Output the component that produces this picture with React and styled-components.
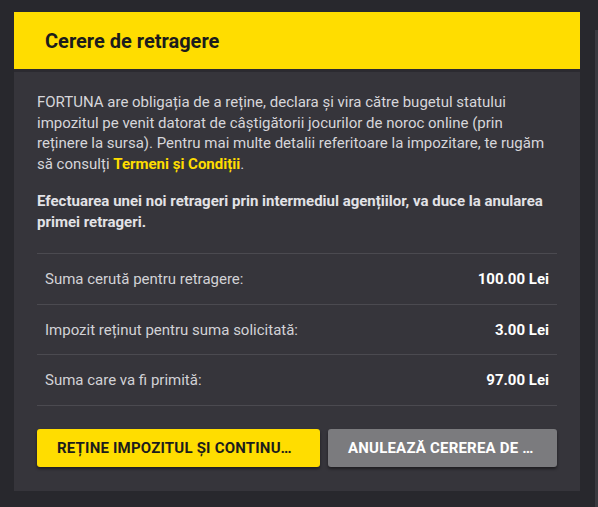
import React from "react";
import styled, { createGlobalStyle } from "styled-components";

const GlobalStyle = createGlobalStyle`
  html, body {
    margin: 0;
    padding: 0;
    background: #28282d;
  }
  body {
    font-family: Roboto, "Liberation Sans", Arial, sans-serif;
    -webkit-font-smoothing: antialiased;
  }
`;

const Page = styled.div`
  display: flex;
  width: 598px;
  height: 507px;
  box-sizing: border-box;
  padding-top: 12px;
  overflow: hidden;
`;

const Modal = styled.div`
  margin-left: 14px;
  width: 566px;
  height: 479px;
  display: flex;
  flex-direction: column;
  background: #36353b;
`;

const Scrollbar = styled.div`
  margin: 18px 0 0 auto;
  width: 3px;
  background: #3a3a40;
`;

const Header = styled.div`
  height: 58px;
  display: flex;
  align-items: center;
  padding: 0 31px;
  background: #ffdd00;
  border-bottom: 3px solid #2b2a30;
`;

const Title = styled.h2`
  margin: 0;
  font-size: 20px;
  font-weight: 700;
  color: #1c1c1c;
`;

const Body = styled.div`
  padding: 20px 23px 24px;
`;

const Paragraph = styled.p`
  margin: 0 0 ${({ $gap }) => $gap}px;
  font-size: 15px;
  line-height: 20.5px;
  color: ${({ $bold }) => ($bold ? "#e2e2e6" : "#d6d6da")};
  font-weight: ${({ $bold }) => ($bold ? 700 : 400)};
`;

const Link = styled.a`
  color: #ffdd00;
  font-weight: 700;
  text-decoration: none;
`;

const Table = styled.div`
  border-top: 1px solid #4b4a50;
`;

const Row = styled.div`
  display: flex;
  justify-content: space-between;
  align-items: center;
  height: 49.67px;
  padding: 0 8px;
  border-bottom: 1px solid #4b4a50;
  font-size: 15px;
`;

const Label = styled.span`
  color: #d2d2d6;
`;

const Value = styled.span`
  color: #ffffff;
  font-weight: 700;
`;

const Actions = styled.div`
  display: flex;
  gap: 8px;
  margin-top: 23px;
`;

const Button = styled.button`
  flex: none;
  width: ${({ $width }) => $width}px;
  height: 38px;
  padding: 0 20px;
  border: none;
  border-radius: 3px;
  box-shadow: 0 2px 3px rgba(0, 0, 0, 0.45);
  background: ${({ $primary }) => ($primary ? "#ffdd00" : "#7b7b7e")};
  color: ${({ $primary }) => ($primary ? "#1c1c1c" : "#ffffff")};
  font-family: inherit;
  font-size: 15px;
  font-weight: 700;
  letter-spacing: 0.2px;
  text-transform: uppercase;
  text-align: left;
  white-space: nowrap;
  overflow: hidden;
  text-overflow: ellipsis;
`;

const rows = [
  { label: "Suma cerută pentru retragere:", value: "100.00 Lei" },
  { label: "Impozit reținut pentru suma solicitată:", value: "3.00 Lei" },
  { label: "Suma care va fi primită:", value: "97.00 Lei" },
];

export default function App() {
  return (
    <>
      <GlobalStyle />
      <Page>
        <Modal>
          <Header>
            <Title>Cerere de retragere</Title>
          </Header>
          <Body>
            <Paragraph $gap={17}>
              FORTUNA are obligația de a reține, declara și vira către bugetul
              statului impozitul pe venit datorat de câștigătorii jocurilor de
              noroc online (prin reținere la sursa). Pentru mai multe detalii
              referitoare la impozitare, te rugăm să consulți{" "}
              <Link href="#">Termeni și Condiții</Link>.
            </Paragraph>
            <Paragraph $bold $gap={21}>
              Efectuarea unei noi retrageri prin intermediul agențiilor, va duce
              la anularea primei retrageri.
            </Paragraph>
            <Table>
              {rows.map((r) => (
                <Row key={r.label}>
                  <Label>{r.label}</Label>
                  <Value>{r.value}</Value>
                </Row>
              ))}
            </Table>
            <Actions>
              <Button $primary $width={283}>
                Reține impozitul și continuă retragerea
              </Button>
              <Button $width={229}>Anulează cererea de retragere</Button>
            </Actions>
          </Body>
        </Modal>
        <Scrollbar />
      </Page>
    </>
  );
}
